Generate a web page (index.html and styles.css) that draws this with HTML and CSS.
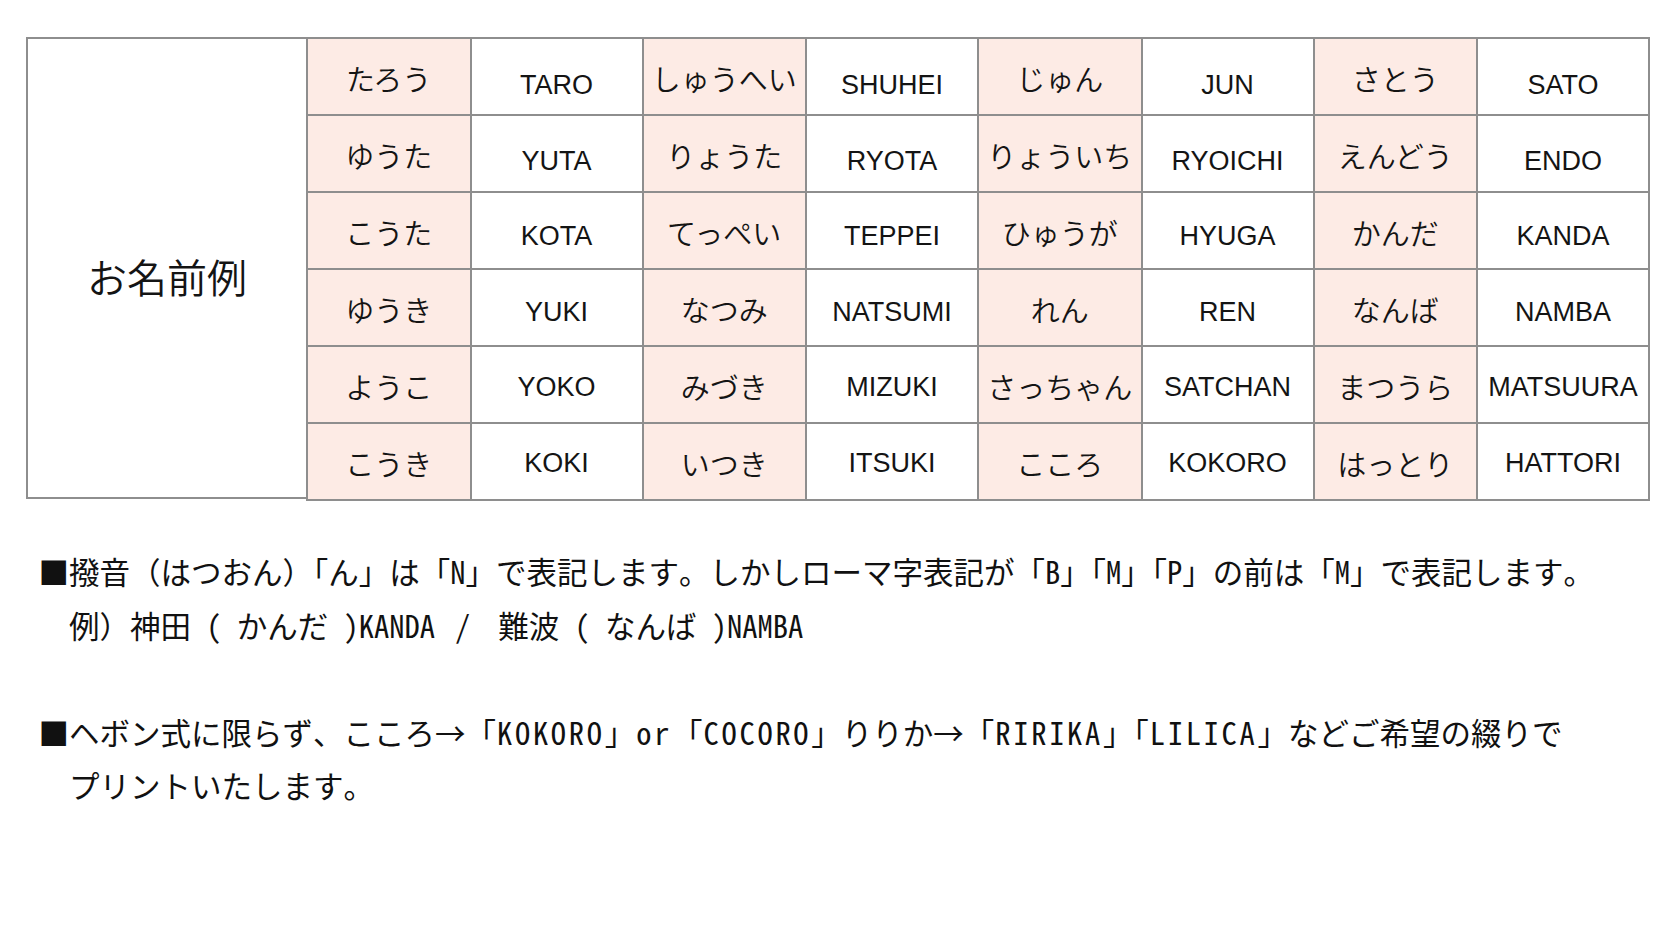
FILE: index.html
```html
<!DOCTYPE html>
<html lang="ja">
<head>
<meta charset="utf-8">
<title>お名前例</title>
<link rel="stylesheet" href="styles.css">
</head>
<body>
<div class="page">
  <div class="chart">
    <div class="label">お名前例</div>
    <div class="names">
      <div class="kana r1">たろう</div><div class="roma r1">TARO</div><div class="kana r1">しゅうへい</div><div class="roma r1">SHUHEI</div><div class="kana r1">じゅん</div><div class="roma r1">JUN</div><div class="kana r1">さとう</div><div class="roma r1">SATO</div>
      <div class="kana r2">ゆうた</div><div class="roma r2">YUTA</div><div class="kana r2">りょうた</div><div class="roma r2">RYOTA</div><div class="kana r2">りょういち</div><div class="roma r2">RYOICHI</div><div class="kana r2">えんどう</div><div class="roma r2">ENDO</div>
      <div class="kana r3">こうた</div><div class="roma r3">KOTA</div><div class="kana r3">てっぺい</div><div class="roma r3">TEPPEI</div><div class="kana r3">ひゅうが</div><div class="roma r3">HYUGA</div><div class="kana r3">かんだ</div><div class="roma r3">KANDA</div>
      <div class="kana r4">ゆうき</div><div class="roma r4">YUKI</div><div class="kana r4">なつみ</div><div class="roma r4">NATSUMI</div><div class="kana r4">れん</div><div class="roma r4">REN</div><div class="kana r4">なんば</div><div class="roma r4">NAMBA</div>
      <div class="kana r5">ようこ</div><div class="roma r5">YOKO</div><div class="kana r5">みづき</div><div class="roma r5">MIZUKI</div><div class="kana r5">さっちゃん</div><div class="roma r5">SATCHAN</div><div class="kana r5">まつうら</div><div class="roma r5">MATSUURA</div>
      <div class="kana r6">こうき</div><div class="roma r6">KOKI</div><div class="kana r6">いつき</div><div class="roma r6">ITSUKI</div><div class="kana r6">こころ</div><div class="roma r6">KOKORO</div><div class="kana r6">はっとり</div><div class="roma r6">HATTORI</div>
    </div>
  </div>
  <div class="notes">
    <p class="note">■撥音（はつおん）「ん」は「N」で表記します。しかしローマ字表記が「B」「M」「P」の前は「M」で表記します。<br>例）神田 ( かんだ )KANDA<span class="sep">/</span>難波 ( なんば )NAMBA</p>
    <p class="note">■ヘボン式に限らず、こころ→「<span class="wide">KOKORO</span>」<span class="wide">or</span>「<span class="wide">COCORO</span>」りりか→「<span class="wide">RIRIKA</span>」「<span class="wide">LILICA</span>」などご希望の綴りで<br>プリントいたします。</p>
  </div>
</div>
</body>
</html>
```

FILE: styles.css
```css
html, body {
  margin: 0;
  padding: 0;
  background: #ffffff;
}

body {
  color: #141414;
  font-family: "Noto Sans CJK JP", "Liberation Sans", sans-serif;
}

.page {
  padding: 37px 0 0 26px;
}

.chart {
  display: flex;
  align-items: flex-start;
}

.label {
  box-sizing: border-box;
  width: 280px;
  height: 462px;
  border: 2px solid #8e8e8e;
  border-right: none;
  display: flex;
  align-items: center;
  justify-content: center;
  padding-top: 16px;
  font-family: "Noto Sans CJK JP", sans-serif;
  font-size: 40px;
  font-weight: 350;
  line-height: 1;
}

.names {
  display: grid;
  grid-template-columns: repeat(4, 161.5px 170px);
  grid-auto-rows: 75px;
  gap: 2px;
  padding: 2px;
  background: #8e8e8e;
}

.kana,
.roma {
  display: flex;
  align-items: center;
  justify-content: center;
  white-space: nowrap;
  line-height: 1;
  box-sizing: border-box;
}

.kana {
  background: #fdebe5;
  font-family: "Noto Sans CJK JP", sans-serif;
  font-size: 29px;
  font-weight: 350;
  padding-top: 4px;
}

.roma {
  background: #ffffff;
  font-family: "Liberation Sans", Arial, sans-serif;
  font-size: 27px;
}

.roma.r1 { padding-top: 18px; }
.roma.r2 { padding-top: 15px; }
.roma.r3 { padding-top: 11px; }
.roma.r4 { padding-top: 10px; }
.roma.r5 { padding-top: 6px; }
.roma.r6 { padding-top: 4px; }

.notes {
  margin-top: 44px;
}

.note {
  margin: 0 0 53.5px 0;
  padding-left: 43px;
  text-indent: -30.5px;
  font-family: "Noto Sans Mono CJK JP", "Noto Sans CJK JP", monospace;
  font-size: 30.5px;
  line-height: 53.5px;
  white-space: nowrap;
  color: #111111;
}

.sep {
  padding: 0 28px 0 20px;
}

.wide {
  letter-spacing: 2.7px;
  padding-left: 1px;
}
```
